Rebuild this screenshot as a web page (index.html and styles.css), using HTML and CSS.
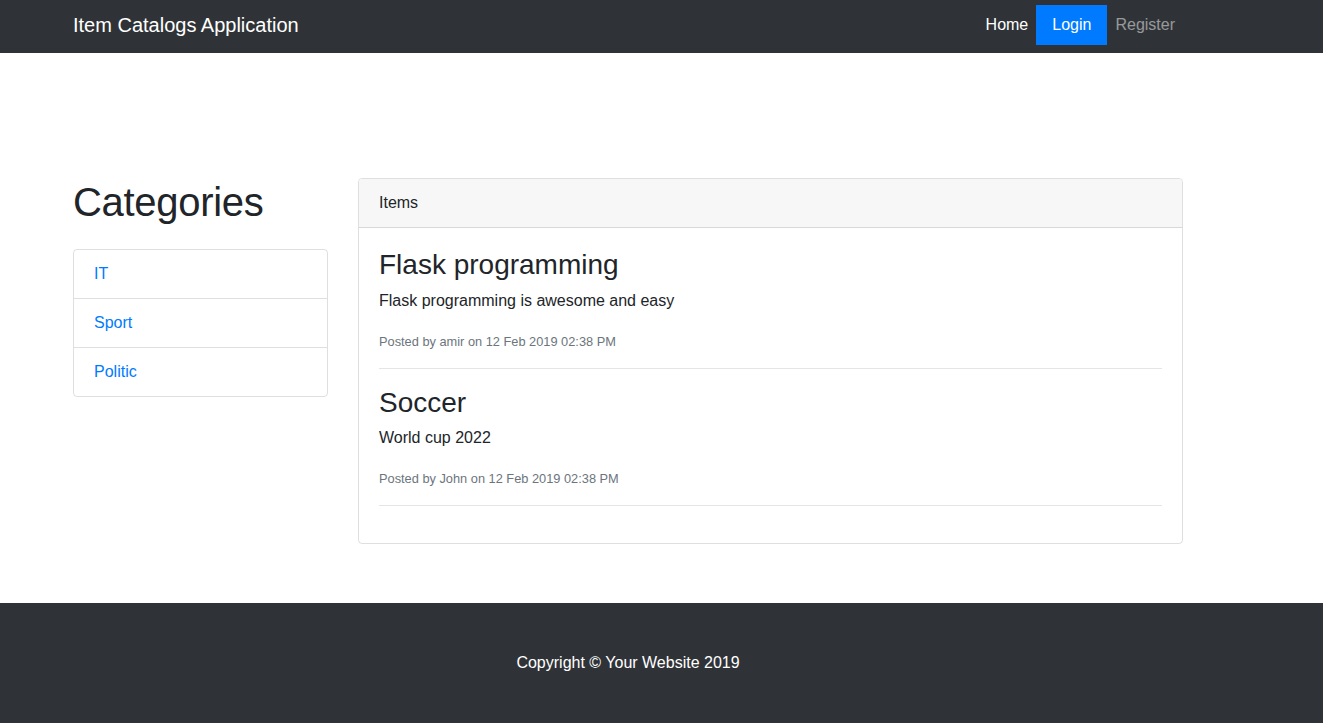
FILE: index.html
```html
<!DOCTYPE html>
<html lang="en">
<head>
<meta charset="utf-8">
<title>Item Catalogs Application</title>
<link rel="stylesheet" href="styles.css">
</head>
<body>
<nav class="navbar">
  <div class="container nav-inner">
    <a class="brand" href="#">Item Catalogs Application</a>
    <ul class="nav-links">
      <li><a class="nav-link active" href="#">Home</a></li>
      <li><a class="nav-link login" href="#">Login</a></li>
      <li><a class="nav-link muted" href="#">Register</a></li>
    </ul>
  </div>
</nav>

<main class="container main">
  <div class="row">
    <aside class="col-side">
      <h1 class="title">Categories</h1>
      <ul class="list-group">
        <li class="list-item"><a href="#">IT</a></li>
        <li class="list-item"><a href="#">Sport</a></li>
        <li class="list-item"><a href="#">Politic</a></li>
      </ul>
    </aside>
    <section class="col-main">
      <div class="card">
        <div class="card-header">Items</div>
        <div class="card-body">
          <h2 class="item-title">Flask programming</h2>
          <p class="item-text">Flask programming is awesome and easy</p>
          <p class="item-meta"><small>Posted by amir on 12 Feb 2019 02:38 PM</small></p>
          <hr class="sep">
          <h2 class="item-title">Soccer</h2>
          <p class="item-text">World cup 2022</p>
          <p class="item-meta"><small>Posted by John on 12 Feb 2019 02:38 PM</small></p>
          <hr class="sep">
        </div>
      </div>
    </section>
  </div>
</main>

<footer class="footer">
  <div class="container">
    <p class="copy">Copyright &copy; Your Website 2019</p>
  </div>
</footer>
</body>
</html>
```

FILE: styles.css
```css
* { box-sizing: border-box; }
html, body { margin: 0; padding: 0; }
body {
  font-family: "Liberation Sans", Arial, sans-serif;
  font-size: 16px;
  line-height: 1.5;
  color: #212529;
  background: #fff;
}
a { text-decoration: none; }

.container {
  width: 1140px;
  margin-left: 58px;
  padding: 0 15px;
}

.navbar {
  background: #2f3337;
  height: 53px;
}
.nav-inner {
  display: flex;
  align-items: center;
  justify-content: space-between;
  height: 50px;
}
.brand {
  color: #fff;
  font-size: 20px;
  line-height: 30px;
}
.nav-links {
  list-style: none;
  margin: 0;
  padding: 0;
  display: flex;
}
.nav-link {
  display: block;
  padding: 8px 8px;
  line-height: 24px;
  color: rgba(255,255,255,.5);
}
.nav-link.active { color: #fff; }
.nav-link.login {
  background: #007bff;
  color: #fff;
  padding: 8px 16px;
}
.nav-link.muted { color: rgba(255,255,255,.5); }

.main {
  padding-top: 125px;
  padding-bottom: 59px;
}
.row {
  display: flex;
  margin: 0 -15px;
}
.col-side {
  width: 285px;
  padding: 0 15px;
}
.col-main {
  width: 855px;
  padding: 0 15px;
}
.title {
  font-size: 40px;
  font-weight: 500;
  line-height: 1.2;
  letter-spacing: -0.3px;
  margin: 0 0 23px;
}
.list-group {
  list-style: none;
  margin: 0;
  padding: 0;
  border: 1px solid rgba(0,0,0,.125);
  border-radius: 4px;
}
.list-item {
  padding: 12px 20px;
  line-height: 24px;
}
.list-item + .list-item {
  border-top: 1px solid rgba(0,0,0,.125);
}
.list-item a { color: #007bff; }

.card {
  border: 1px solid rgba(0,0,0,.125);
  border-radius: 4px;
  overflow: hidden;
}
.card-header {
  background: #f7f7f7;
  padding: 12px 20px;
  line-height: 24px;
  border-bottom: 1px solid rgba(0,0,0,.125);
}
.card-body {
  padding: 20px 20px 20px;
}
.item-title {
  font-size: 28px;
  font-weight: 500;
  line-height: 1.2;
  margin: 0 0 7px;
}
.item-text {
  margin: 0 0 16px;
}
.item-meta {
  margin: 0;
  color: #6c757d;
}
.item-meta small { font-size: 12.8px; }
.sep {
  border: 0;
  border-top: 1px solid rgba(0,0,0,.1);
  margin: 15px 0 17px;
}

.footer {
  background: #2f3337;
  padding: 48px 0;
}
.copy {
  margin: 0;
  text-align: center;
  color: #fff;
}
```
